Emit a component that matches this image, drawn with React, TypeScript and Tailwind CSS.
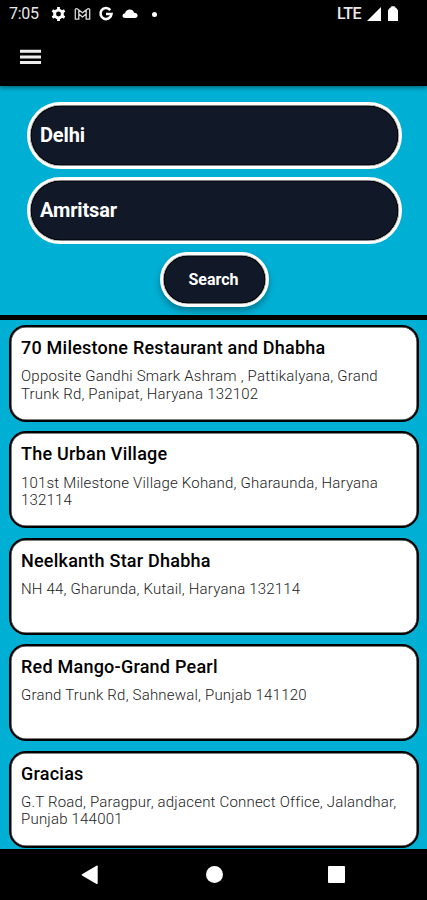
import React from "react";

const places = [
  { name: "70 Milestone Restaurant and Dhabha", lines: ["Opposite Gandhi Smark Ashram , Pattikalyana, Grand", "Trunk Rd, Panipat, Haryana 132102"] },
  { name: "The Urban Village", lines: ["101st Milestone Village Kohand, Gharaunda, Haryana", "132114"] },
  { name: "Neelkanth Star Dhabha", lines: ["NH 44, Gharunda, Kutail, Haryana 132114"] },
  { name: "Red Mango-Grand Pearl", lines: ["Grand Trunk Rd, Sahnewal, Punjab 141120"] },
  { name: "Gracias", lines: ["G.T Road, Paragpur, adjacent Connect Office, Jalandhar,", "Punjab 144001"] },
];

function StatusBar() {
  return (
    <div className="flex h-[28px] items-center pl-[9px] text-[#e8e8e8]">
      <span className="w-[42px] text-[16px] leading-none tracking-[-0.3px]">7:05</span>
      <svg className="h-4 w-4" viewBox="0 0 16 16" fill="none" stroke="white">
        <circle cx="7.5" cy="8" r="3.9" strokeWidth="2.9" />
        <path d="M7.5 1v3M7.5 12v3M1.4 4.5L4 6M11 10l2.6 1.5M1.4 11.5L4 10M11 6l2.6-1.5" strokeWidth="2.8" />
      </svg>
      <svg className="ml-[7px] h-4 w-[17px]" viewBox="0 0 17 16" fill="none" stroke="#d8d8d8" strokeWidth="1.3" strokeLinejoin="round">
        <path d="M1.3 13.2V3.4q1.2-1.4 2.6-.2l4.6 3.6 4.6-3.6q1.4-1.2 2.6.2v9.8h-3.5V8L8.5 11 4.8 8v5.2zM4.8 8V3.9M12.2 8V3.9" />
      </svg>
      <svg className="ml-[7px] h-4 w-4" viewBox="0 0 16 16" fill="none" stroke="white" strokeWidth="2.6">
        <path d="M12.3 4.1A5.5 5.5 0 1 0 13.5 8H8" />
      </svg>
      <svg className="ml-[8px] h-4 w-4" viewBox="0 0 16 16" fill="white">
        <path d="M3.5 12Q.5 12 .5 9.8.5 7.7 3 7.3 4.2 3.6 7.7 3.6q3.5 0 4.3 3.2 3.6.3 3.6 2.8Q15.6 12 12.8 12z" />
      </svg>
      <span className="ml-[14px] h-[5px] w-[5px] rounded-full bg-white" />
      <span className="ml-[180px] w-[30px] text-[16px] leading-none font-medium tracking-[-0.5px]">LTE</span>
      <svg className="h-4 w-[14px]" viewBox="0 0 14 16" fill="white"><path d="M0 15L14 1v14z" /></svg>
      <svg className="ml-[7px] h-4 w-[10px]" viewBox="0 0 10 16" fill="white"><path d="M3.2 1.6V.3h3.6v1.3h1L10 4.2V15H0V4.2l2.2-2.6z" /></svg>
    </div>
  );
}

function Field({ value }: { value: string }) {
  return (
    <div className="flex h-[67px] items-center rounded-full border-3 border-white bg-[#111827] pb-px pl-[10.5px] text-[20px] font-bold tracking-[-0.15px] text-white shadow-[inset_0_0_0_0.5px_#fff,inset_0_0_0_1.5px_#000]">
      <span>{value}</span>
    </div>
  );
}

export default function App() {
  return (
    <div className="flex h-[900px] w-[427px] flex-col overflow-hidden bg-[#00afd4] font-['Roboto',sans-serif]">
      <header className="z-10 h-[86px] shrink-0 bg-black shadow-[0_2px_4px_rgba(0,0,0,0.4)]">
        <StatusBar />
        <svg className="mt-[21px] ml-[20px] h-[16px] w-[21px]" viewBox="0 0 21 16" fill="#ededed">
          <path d="M0 .8h21v3H0zM0 6.4h21v3H0zM0 12h21v3H0z" />
        </svg>
      </header>
      <section className="flex h-[234px] shrink-0 flex-col border-b-[5px] border-black pt-[16px] pr-[25.5px] pl-[26.5px]">
        <Field value="Delhi" />
        <div className="h-[8px]" />
        <Field value="Amritsar" />
        <button className="mt-[8px] ml-[133px] h-[55px] w-[109px] rounded-full border-3 border-white bg-[#111827] pr-px text-[16px] font-bold text-white shadow-[inset_0_0_0_0.5px_#fff,inset_0_0_0_1.5px_#000,0_4px_6px_rgba(0,0,0,0.3)]">
          Search
        </button>
      </section>
      <main className="flex flex-1 flex-col gap-[9.4px] overflow-hidden pt-[5px] pr-[8.5px] pl-[9px]">
        {places.map((place) => (
          <article key={place.name} className="h-[97px] shrink-0 rounded-[17px] border-2 border-black bg-white pt-[10px] pl-[10px] shadow-[inset_0_0_0_0.5px_#000]">
            <h2 className="text-[18px] leading-[22px] font-medium tracking-[0.23px] whitespace-nowrap text-black">{place.name}</h2>
            <p className="mt-[9.2px] text-[15px] leading-[17.5px] font-light tracking-[0.2px] whitespace-nowrap text-[#222]">
              {place.lines.map((line) => (
                <span key={line} className="block">{line}</span>
              ))}
            </p>
          </article>
        ))}
      </main>
      <nav className="flex h-[51px] shrink-0 items-center bg-black pl-[81px]">
        <svg className="h-[20px] w-[17px]" viewBox="0 0 17 20" fill="white"><path d="M1 9.2L15.5.7q1.2-.5 1.2.6v17q0 1.1-1.2.6L1 10.4Q.2 9.8 1 9.2z" /></svg>
        <span className="ml-[107.5px] h-[17px] w-[17px] rounded-full bg-white" />
        <span className="ml-[105.5px] h-[17px] w-[17px] rounded-[1px] bg-white" />
      </nav>
    </div>
  );
}
